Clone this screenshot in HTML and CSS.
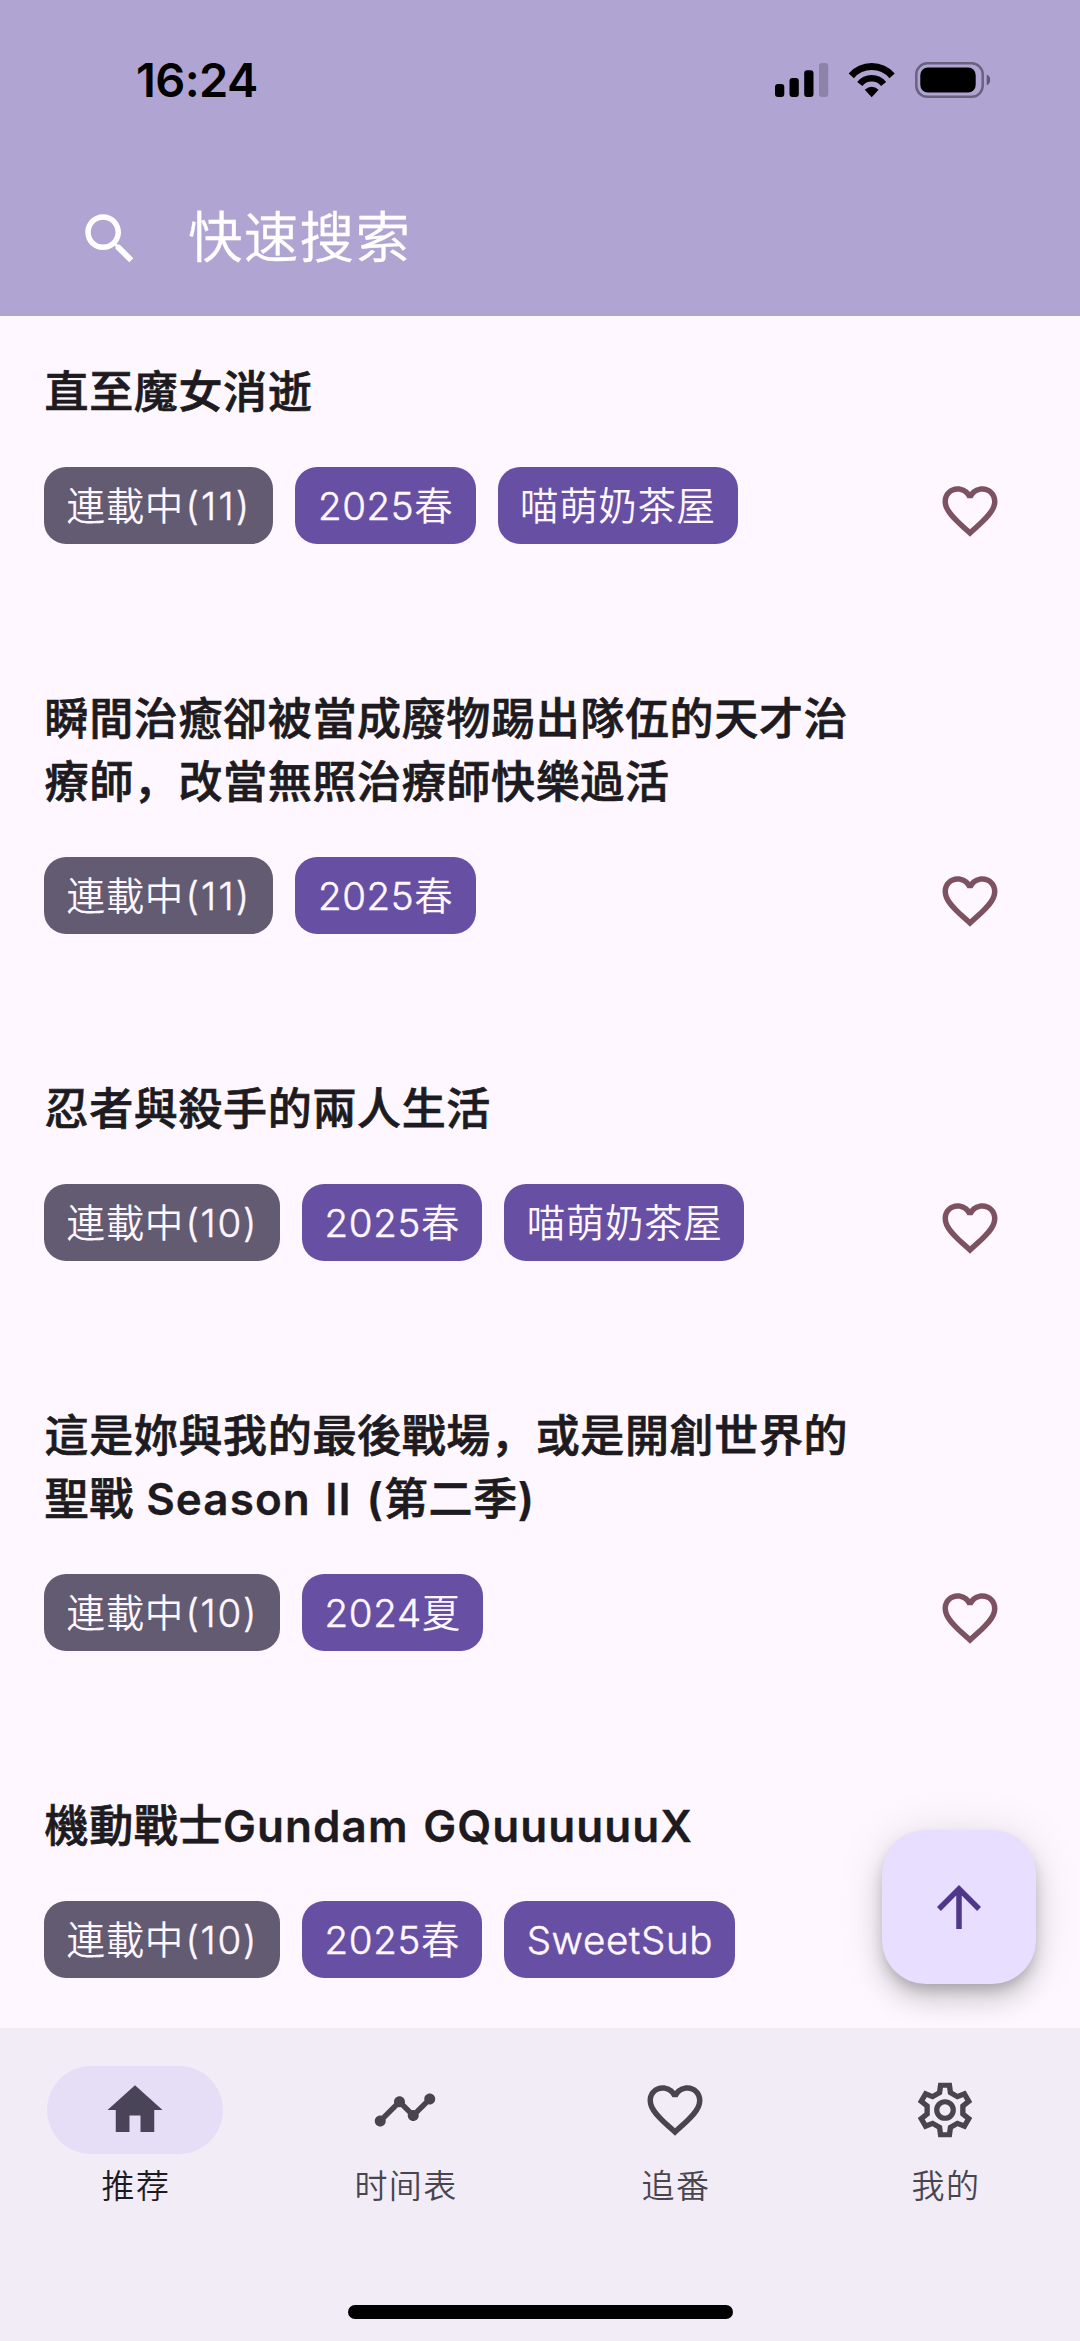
FILE: index.html
```html
<!DOCTYPE html>
<html lang="zh-CN">
<head>
<meta charset="utf-8">
<title>推荐</title>
<link rel="stylesheet" href="styles.css">
</head>
<body>
<svg class="defs" aria-hidden="true">
  <symbol id="heart" viewBox="0 0 24 24"><path d="M16.5 3c-1.74 0-3.41.81-4.5 2.09C10.91 3.81 9.24 3 7.5 3 4.42 3 2 5.42 2 8.5c0 3.78 3.4 6.86 8.55 11.54L12 21.35l1.45-1.32C18.6 15.36 22 12.28 22 8.5 22 5.42 19.58 3 16.5 3zm-4.4 15.55l-.1.1-.1-.1C7.14 14.24 4 11.39 4 8.5 4 6.5 5.5 5 7.5 5c1.54 0 3.04.99 3.57 2.36h1.87C13.46 5.99 14.96 5 16.5 5c2 0 3.5 1.5 3.5 3.5 0 2.89-3.14 5.74-7.9 10.05z"/></symbol>
</svg>
<div class="app">
  <header class="header">
    <div class="status">
      <span class="time">16:24</span>
      <svg class="status-icons" viewBox="0 0 218 38" width="218" height="38">
        <rect x="1" y="22" width="9.300" height="13" rx="3"/><rect x="15.500" y="16" width="9.300" height="19" rx="3"/><rect x="30.200" y="8.300" width="9.300" height="26.700" rx="3"/><rect x="45" y="1" width="9.200" height="34" rx="3" opacity=".2"/>
        <g fill="none" stroke="#000"><path stroke-width="7" d="M77.300 13.900A27 27 0 0 1 118.100 13.900"/><path stroke-width="6.600" d="M85.800 22A15.300 15.300 0 0 1 109.600 22"/></g>
        <path d="M97.700 35.200L90.800 27.800Q97.700 21.600 104.600 27.800z"/>
        <rect x="142.300" y="1.300" width="66.400" height="33.500" rx="11" fill="none" stroke="#000" stroke-opacity=".4" stroke-width="2.500"/>
        <rect x="146.300" y="5.600" width="55.400" height="24.800" rx="7.500"/>
        <path d="M212.700 12.500q3.500 1.500 3.500 5.400t-3.500 5.400z" opacity=".45"/>
      </svg>
    </div>
    <div class="search">
      <svg class="icon" viewBox="0 0 24 24"><path d="M15.500 14h-.79l-.28-.27C15.410 12.590 16 11.110 16 9.500 16 5.910 13.090 3 9.500 3S3 5.910 3 9.500 5.910 16 9.500 16c1.610 0 3.090-.59 4.230-1.570l.27.28v.79l5 4.990L20.490 19l-4.990-5zm-6 0C7.010 14 5 11.990 5 9.500S7.010 5 9.500 5 14 7.010 14 9.500 11.990 14 9.500 14z"/></svg>
      <span class="hint">快速搜索</span>
    </div>
  </header>
  <main class="list">
    <article class="item">
      <h2 class="title">直至魔女消逝</h2>
      <div class="row">
        <div class="chips"><span class="chip state">連載中<span class="count narrow">(11)</span></span><span class="chip"><span class="num">2025</span>春</span><span class="chip">喵萌奶茶屋</span></div>
        <svg class="icon fav"><use href="#heart"/></svg>
      </div>
    </article>
    <article class="item">
      <h2 class="title">瞬間治癒卻被當成廢物踢出隊伍的天才治療師，改當無照治療師快樂過活</h2>
      <div class="row">
        <div class="chips"><span class="chip state">連載中<span class="count narrow">(11)</span></span><span class="chip"><span class="num">2025</span>春</span></div>
        <svg class="icon fav"><use href="#heart"/></svg>
      </div>
    </article>
    <article class="item">
      <h2 class="title">忍者與殺手的兩人生活</h2>
      <div class="row">
        <div class="chips"><span class="chip state">連載中<span class="count">(10)</span></span><span class="chip"><span class="num">2025</span>春</span><span class="chip">喵萌奶茶屋</span></div>
        <svg class="icon fav"><use href="#heart"/></svg>
      </div>
    </article>
    <article class="item">
      <h2 class="title">這是妳與我的最後戰場，或是開創世界的聖戰 <span class="latin">Season II (</span>第二季<span class="latin">)</span></h2>
      <div class="row">
        <div class="chips"><span class="chip state">連載中<span class="count">(10)</span></span><span class="chip"><span class="num">2024</span>夏</span></div>
        <svg class="icon fav"><use href="#heart"/></svg>
      </div>
    </article>
    <article class="item">
      <h2 class="title">機動戰士<span class="latin">Gundam GQuuuuuuX</span></h2>
      <div class="row">
        <div class="chips"><span class="chip state">連載中<span class="count">(10)</span></span><span class="chip"><span class="num">2025</span>春</span><span class="chip"><span class="num">SweetSub</span></span></div>
      </div>
    </article>
    <button class="fab" aria-label="回到顶部"><svg class="icon" viewBox="0 0 24 24"><path d="M4 12l1.410 1.410L11 7.830V20h2V7.830l5.580 5.590L20 12l-8-8-8 8z"/></svg></button>
  </main>
  <nav class="nav">
    <div class="tabs">
      <a class="tab active"><span class="pill"><svg class="icon" viewBox="0 0 24 24"><path d="M10 20v-6h4v6h5v-8h3L12 3 2 12h3v8z"/></svg></span><span class="label">推荐</span></a>
      <a class="tab"><span class="pill"><svg class="icon" viewBox="0 0 24 24"><path d="M23 8c0 1.100-.9 2-2 2-.18 0-.35-.02-.51-.07l-3.560 3.550c.05.16.07.34.07.52 0 1.100-.9 2-2 2s-2-.9-2-2c0-.18.02-.36.07-.52l-2.550-2.550c-.16.05-.34.07-.52.07s-.36-.02-.52-.07l-4.550 4.560c.05.16.07.33.07.51 0 1.100-.9 2-2 2s-2-.9-2-2 .9-2 2-2c.18 0 .35.02.51.07l4.560-4.550C8.020 9.360 8 9.180 8 9c0-1.100.9-2 2-2s2 .9 2 2c0 .18-.02.36-.07.52l2.550 2.550c.16-.05.34-.07.52-.07s.36.02.52.07l3.550-3.560C19.020 8.350 19 8.180 19 8c0-1.100.9-2 2-2s2 .9 2 2z"/></svg></span><span class="label">时间表</span></a>
      <a class="tab"><span class="pill"><svg class="icon"><use href="#heart"/></svg></span><span class="label">追番</span></a>
      <a class="tab"><span class="pill"><svg class="icon" viewBox="0 0 24 24">
        <clipPath id="gear-clip"><path d="M9.550 2h4.900l.43 3.050 1.710 1 2.880-1.170 2.430 4.220-2.430 1.920v1.960l2.430 1.920-2.430 4.220-2.880-1.170-1.710 1L14.450 22h-4.900l-.43-3.050-1.710-1-2.880 1.170L2.100 14.900l2.430-1.920v-1.960L2.100 9.100l2.430-4.220 2.880 1.170 1.710-1z"/></clipPath>
        <path clip-path="url(#gear-clip)" fill="none" stroke="currentColor" stroke-width="3.900" d="M9.550 2h4.900l.43 3.050 1.710 1 2.880-1.170 2.430 4.220-2.430 1.920v1.960l2.430 1.920-2.430 4.220-2.880-1.170-1.710 1L14.450 22h-4.900l-.43-3.050-1.710-1-2.880 1.170L2.100 14.900l2.430-1.920v-1.960L2.100 9.100l2.430-4.220 2.880 1.170 1.710-1z"/>
        <circle cx="12" cy="12" r="3" fill="none" stroke="currentColor" stroke-width="1.900"/></svg></span><span class="label">我的</span></a>
    </div>
    <div class="home-bar"></div>
  </nav>
</div>
</body>
</html>
```
FILE: styles.css
```css
* { box-sizing: border-box; }
body {
  margin: 0;
  font-family: Inter, "Noto Sans CJK SC", sans-serif;
  color: #1d1b20;
  background: #fef7ff;
}
.defs { display: none; }
.app {
  width: 1080px;
  height: 2341px;
  display: flex;
  flex-direction: column;
  overflow: hidden;
}
.icon { width: 66px; height: 66px; fill: currentColor; flex: none; display: block; }

.header { height: 316px; flex: none; background: #b0a4d2; }
.status {
  height: 162px;
  display: flex;
  justify-content: space-between;
  padding: 50px 88px 0 136px;
}
.time { font-size: 47px; font-weight: 600; line-height: 60px; letter-spacing: -.6px; color: #000; }
.status-icons { margin-top: 12px; }
.search {
  display: flex;
  align-items: center;
  height: 154px;
  padding: 0 0 0 77px;
  gap: 45px;
  color: #fff;
}
.hint { font-size: 54.500px; font-weight: 350; line-height: 80px; letter-spacing: 1.300px; padding-bottom: 5px; -webkit-text-stroke: .4px; }

.list { flex: 1; min-height: 0; position: relative; }
.item { padding: 45px 77px 99.600px 44px; }
.title {
  margin: 0 0 43px;
  padding-left: .5px;
  width: 820px;
  font-size: 44px;
  font-weight: 500;
  line-height: 63px;
  letter-spacing: .65px;
  -webkit-text-stroke: .7px;
}
.latin { font-weight: 600; letter-spacing: 1.050px; word-spacing: 2.500px; -webkit-text-stroke: .3px; }
.row { display: flex; justify-content: space-between; height: 76.500px; }
.chips { display: flex; gap: 22px; }
.chip {
  height: 76.500px;
  padding: 1px 22px 0 22.500px;
  border-radius: 22px;
  background: #6750a4;
  color: #fef7ff;
  font-size: 38.500px;
  font-weight: 350;
  line-height: 76.500px;
  letter-spacing: .65px;
  white-space: nowrap;
}
.state { background: #625b71; }
.count { margin-left: 1.500px; letter-spacing: 1.700px; -webkit-text-stroke: .5px; }
.narrow { letter-spacing: 2.200px; }
.num { -webkit-text-stroke: .5px; }
.fav { margin-top: 11px; color: #7d5260; }

.fab {
  position: absolute;
  right: 44px;
  bottom: 44px;
  width: 154px;
  height: 154px;
  border: 0;
  padding: 0;
  border-radius: 44px;
  background: #e8deff;
  color: #4f378b;
  display: flex;
  align-items: center;
  justify-content: center;
  box-shadow: 0 8px 14px -3px rgba(0, 0, 0, .2), 0 16px 27px rgba(0, 0, 0, .14), 0 3px 49px rgba(0, 0, 0, .1);
}

.nav {
  position: relative;
  height: 313px;
  flex: none;
  background: #f2ecf7;
  display: flex;
  flex-direction: column;
  justify-content: space-between;
  align-items: center;
  padding: 38px 0 22px;
}
.tabs { width: 100%; display: flex; }
.tab {
  flex: 1;
  display: flex;
  flex-direction: column;
  align-items: center;
  gap: 8px;
  font-size: 33px;
  font-weight: 350;
  line-height: 48px;
  letter-spacing: 1.400px;
  color: #49454f;
}
.label { padding-left: 2px; }
.pill {
  width: 176px;
  height: 88px;
  border-radius: 44px;
  display: flex;
  align-items: center;
  justify-content: center;
}
.active { color: #1d1b20; }
.active .pill { background: #e6def6; color: #4a4458; }
.home-bar { width: 385px; height: 14px; border-radius: 7px; background: #000; }
```
